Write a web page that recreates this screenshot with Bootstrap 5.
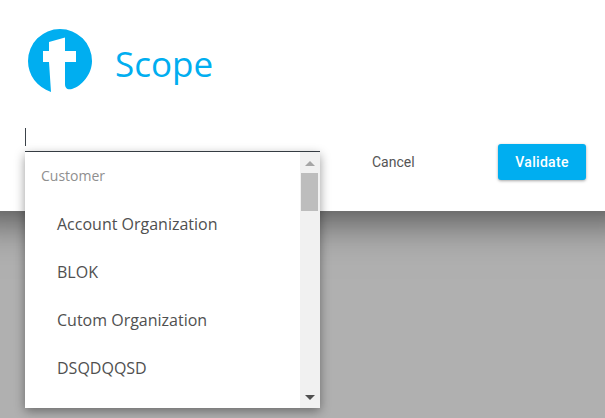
<!doctype html>
<html lang="en"><head><meta charset="utf-8"><title>Scope</title>
<link href="https://cdn.jsdelivr.net/npm/bootstrap@5.3.0/dist/css/bootstrap.min.css" rel="stylesheet">
<style>
html,body{height:100%;overflow:hidden}
body{background:#b0b0b0;font-family:"Open Sans",sans-serif;color:#444}
.sheet{height:211px;background:#fff;box-shadow:0 -32px 40px 40px rgba(0,0,0,.58);padding:29px 19px 0 25px;position:relative}
.brand-row{height:64px;gap:23px;padding-left:3px}
.scope-title{font-size:35px;line-height:1;color:#00aef0;font-weight:400;margin:4px 0 0}
.action-row{margin-top:35px;position:relative}
.field{width:295px;height:24px;border-bottom:1px solid #3c434a;flex:none}
.caret-bar{width:1px;height:18px;background:#3c434a}
.btn-cancel{font-size:14px;color:#555;padding:0;border:0;background:none;margin-left:52px;margin-top:24px;font-family:"Roboto",sans-serif;line-height:20px}
.btn-validate{width:88px;height:36px;background:#00aef0;border:0;border-radius:3px;color:#fff;font-family:"Roboto",sans-serif;font-weight:500;font-size:14px;letter-spacing:.3px;padding:0;box-shadow:0 1px 3px rgba(0,0,0,.35);margin-top:16px}
.menu-drop{position:absolute;left:25px;top:152px;width:295px;height:256px;background:#fff;box-shadow:0 3px 10px rgba(0,0,0,.4);z-index:5;overflow:hidden}
.menu-list{padding:0}
.menu-head{font-size:14px;color:#8f8f8f;padding-left:16px;height:48px;line-height:48px}
.menu-opt{font-size:16px;color:#505050;padding-left:32px;height:48px;line-height:48px}
.scroll-track{width:20px;background:#f1f1f1;position:relative;flex:none}
.scroll-thumb{position:absolute;left:1px;top:21px;width:17px;height:38px;background:#bdbdbd}
.arrow-up,.arrow-down{position:absolute;left:5px;width:0;height:0;border-left:5px solid transparent;border-right:5px solid transparent}
.arrow-up{top:9px;border-bottom:5px solid #a6a6a6}
.arrow-down{bottom:8px;border-top:5px solid #505050}
</style></head>
<body>
<div class="sheet">
  <div class="d-flex align-items-center brand-row">
    <svg width="64" height="64" viewBox="0 0 64 64" aria-hidden="true"><path fill="#00aef0" d="M32 0A32 32 0 0 1 64 32C64 45 54 57 44 60C39 61 37 59 37 55V33H48V22H37V8.5L21 13V22H15V33H21L23 63C9 58 0 46 0 32A32 32 0 0 1 32 0Z"/></svg>
    <h1 class="scope-title">Scope</h1>
  </div>
  <div class="d-flex action-row">
    <div class="field"><div class="caret-bar"></div></div>
    <button class="btn-cancel flex-shrink-0 align-self-start" type="button">Cancel</button>
    <button class="btn-validate ms-auto align-self-start" type="button">Validate</button>
  </div>
</div>
<div class="menu-drop d-flex">
  <div class="menu-list flex-grow-1">
    <div class="menu-head">Customer</div>
    <div class="menu-opt">Account Organization</div>
    <div class="menu-opt">BLOK</div>
    <div class="menu-opt">Cutom Organization</div>
    <div class="menu-opt">DSQDQQSD</div>
  </div>
  <div class="scroll-track"><div class="arrow-up"></div><div class="scroll-thumb"></div><div class="arrow-down"></div></div>
</div>
<script src="https://cdn.jsdelivr.net/npm/bootstrap@5.3.0/dist/js/bootstrap.bundle.min.js"></script>
</body></html>
